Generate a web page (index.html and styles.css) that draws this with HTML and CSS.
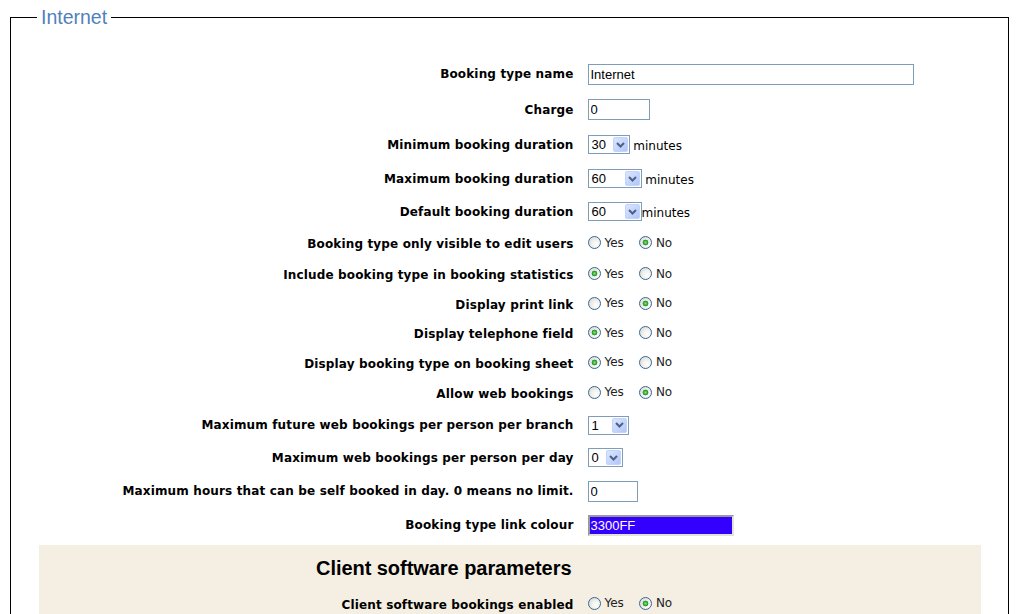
FILE: index.html
```html
<!DOCTYPE html>
<html lang="en">
<head>
<meta charset="utf-8">
<title>Booking type - Internet</title>
<link rel="stylesheet" href="styles.css">
</head>
<body>
<fieldset class="panel">
  <legend class="panel-title">Internet</legend>
  <table class="form">
    <tr class="h36"><td class="lbl">Booking type name</td><td class="val"><input class="txt w-name" type="text" value="Internet"></td></tr>
    <tr class="h35"><td class="lbl">Charge</td><td class="val"><input class="txt w-charge" type="text" value="0"></td></tr>
    <tr class="h35"><td class="lbl">Minimum booking duration</td><td class="val"><span class="sel w42"><span class="sel-text">30</span><span class="sel-btn"><svg width="9" height="6" viewBox="0 0 9 6"><path d="M1 1 L4.5 4.5 L8 1" fill="none" stroke="#4d6185" stroke-width="2"/></svg></span></span> <span class="unit">minutes</span></td></tr>
    <tr class="h33"><td class="lbl">Maximum booking duration</td><td class="val"><span class="sel w54"><span class="sel-text">60</span><span class="sel-btn"><svg width="9" height="6" viewBox="0 0 9 6"><path d="M1 1 L4.5 4.5 L8 1" fill="none" stroke="#4d6185" stroke-width="2"/></svg></span></span> <span class="unit">minutes</span></td></tr>
    <tr class="h33"><td class="lbl">Default booking duration</td><td class="val"><span class="sel w54"><span class="sel-text">60</span><span class="sel-btn"><svg width="9" height="6" viewBox="0 0 9 6"><path d="M1 1 L4.5 4.5 L8 1" fill="none" stroke="#4d6185" stroke-width="2"/></svg></span></span><span class="unit">minutes</span></td></tr>
    <tr class="h32"><td class="lbl">Booking type only visible to edit users</td><td class="val"><span class="opt"><span class="radio"></span>Yes</span><span class="opt"><span class="radio on"></span>No</span></td></tr>
    <tr class="h30"><td class="lbl">Include booking type in booking statistics</td><td class="val"><span class="opt"><span class="radio on"></span>Yes</span><span class="opt"><span class="radio"></span>No</span></td></tr>
    <tr class="h29"><td class="lbl">Display print link</td><td class="val"><span class="opt"><span class="radio"></span>Yes</span><span class="opt"><span class="radio on"></span>No</span></td></tr>
    <tr class="h30"><td class="lbl">Display telephone field</td><td class="val"><span class="opt"><span class="radio on"></span>Yes</span><span class="opt"><span class="radio"></span>No</span></td></tr>
    <tr class="h29"><td class="lbl">Display booking type on booking sheet</td><td class="val"><span class="opt"><span class="radio on"></span>Yes</span><span class="opt"><span class="radio"></span>No</span></td></tr>
    <tr class="h31"><td class="lbl">Allow web bookings</td><td class="val"><span class="opt"><span class="radio"></span>Yes</span><span class="opt"><span class="radio on"></span>No</span></td></tr>
    <tr class="h32"><td class="lbl">Maximum future web bookings per person per branch</td><td class="val"><span class="sel w41"><span class="sel-text">1</span><span class="sel-btn"><svg width="9" height="6" viewBox="0 0 9 6"><path d="M1 1 L4.5 4.5 L8 1" fill="none" stroke="#4d6185" stroke-width="2"/></svg></span></span></td></tr>
    <tr class="h33"><td class="lbl">Maximum web bookings per person per day</td><td class="val"><span class="sel w35"><span class="sel-text">0</span><span class="sel-btn"><svg width="9" height="6" viewBox="0 0 9 6"><path d="M1 1 L4.5 4.5 L8 1" fill="none" stroke="#4d6185" stroke-width="2"/></svg></span></span></td></tr>
    <tr class="h34"><td class="lbl">Maximum hours that can be self booked in day. 0 means no limit.</td><td class="val"><input class="txt w-hours" type="text" value="0"></td></tr>
    <tr class="h34"><td class="lbl">Booking type link colour</td><td class="val"><input class="colour" type="text" value="3300FF"></td></tr>
  </table>
  <table class="form client">
    <tr class="h42"><td class="lbl"><h3 class="section-title">Client software parameters</h3></td><td class="val"></td></tr>
    <tr class="h35"><td class="lbl">Client software bookings enabled</td><td class="val"><span class="opt"><span class="radio"></span>Yes</span><span class="opt"><span class="radio on"></span>No</span></td></tr>
  </table>
</fieldset>
</body>
</html>
```

FILE: styles.css
```css
html, body {
  overflow: hidden;
}
body {
  margin: 8px;
  background: #fff;
  color: #000;
  font-family: "DejaVu Sans", Verdana, sans-serif;
  font-size: 12px;
}
.panel {
  margin: 0 19px 0 2px;
  border: 1px solid #000;
  padding: 30px 12px 10px;
  min-width: 0;
}
.panel-title {
  margin-left: 14px;
  padding: 0 4px;
  font: 19.5px/18px "Liberation Sans", Arial, sans-serif;
  color: #4f81bd;
}
.form {
  width: 942px;
  margin: 0 auto;
  border-collapse: collapse;
  table-layout: fixed;
}
.form td {
  padding: 0;
  vertical-align: middle;
}
.form .lbl {
  width: 535px;
  padding-right: 7px;
  text-align: right;
  font-weight: bold;
  letter-spacing: 0.15px;
  white-space: nowrap;
}
.form .val {
  padding-left: 7px;
  white-space: nowrap;
}
.client {
  margin-top: 3px;
  background: #f5efe3;
}
.section-title {
  margin: 0;
  padding: 4px 2px 0 0;
  font: bold 20px "Liberation Sans", Arial, sans-serif;
  letter-spacing: -0.05px;
}
.h29 { height: 29px; }
.h30 { height: 30px; }
.h31 { height: 31px; }
.h32 { height: 32px; }
.h33 { height: 33px; }
.h34 { height: 34px; }
.h35 { height: 35px; }
.h36 { height: 36px; }
.h42 { height: 42px; }

.txt {
  box-sizing: border-box;
  height: 21px;
  margin: 0;
  padding: 0 2px;
  border: 1px solid #7f9db9;
  background: #fff;
  font: 13px "Liberation Sans", Arial, sans-serif;
  color: #000;
  vertical-align: middle;
}
.w-name { width: 326px; }
.w-charge { width: 62px; }
.w-hours { width: 50px; }

.colour {
  box-sizing: border-box;
  width: 146px;
  height: 21px;
  margin: 0;
  padding: 0 1px;
  border-style: solid;
  border-width: 2px;
  border-color: #9a9a9a #e4e2dc #e4e2dc #9a9a9a;
  background: #3300ff;
  color: #fff;
  font: 13px "Liberation Sans", Arial, sans-serif;
  vertical-align: middle;
}

.sel {
  box-sizing: border-box;
  display: inline-flex;
  align-items: center;
  justify-content: space-between;
  height: 19px;
  padding: 1px;
  border: 1px solid #7f9db9;
  background: #fff;
  font: 13px "Liberation Sans", Arial, sans-serif;
  vertical-align: middle;
}
.unit {
  vertical-align: -2px;
}
.w35 { width: 35px; }
.w41 { width: 41px; }
.w42 { width: 42px; }
.w54 { width: 54px; }
.sel-text {
  padding-left: 2px;
}
.sel-btn {
  box-sizing: border-box;
  display: flex;
  align-items: center;
  justify-content: center;
  width: 15px;
  height: 15px;
  border: 1px solid #c3d3fd;
  border-radius: 2px;
  background: linear-gradient(135deg, #dbe6fe 0%, #c4d5fc 55%, #b1c6f6 100%);
}

.opt {
  display: inline-flex;
  align-items: center;
  margin-right: 15px;
  font-size: 12px;
  color: #222;
}
.radio {
  box-sizing: border-box;
  width: 13px;
  height: 13px;
  margin-right: 4px;
  border: 1px solid #3a6796;
  border-radius: 50%;
  background: radial-gradient(circle at 65% 65%, #ffffff 0%, #f1f1ee 40%, #d4d3cc 100%);
}
.radio.on {
  background:
    radial-gradient(circle at 50% 50%, #8de28d 0, #2fa42f 2px, #219b21 2.6px, transparent 3.2px),
    radial-gradient(circle at 65% 65%, #ffffff 0%, #f1f1ee 40%, #d4d3cc 100%);
}
```
